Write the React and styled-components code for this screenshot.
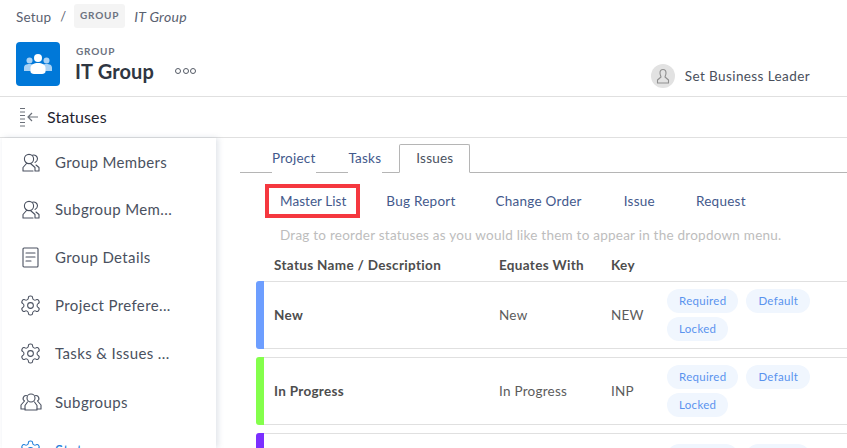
import React from "react";
import styled, { createGlobalStyle } from "styled-components";

const Global = createGlobalStyle`
  html, body { margin: 0; padding: 0; background: #fff; }
  body { font-family: "Lato", "Open Sans", "Liberation Sans", sans-serif; color: #454b57; }
  * { box-sizing: border-box; }
`;

const Page = styled.div`
  width: 847px;
  height: 448px;
  overflow: hidden;
  display: flex;
  flex-direction: column;
`;

const Breadcrumb = styled.div`
  height: 31px;
  flex: none;
  padding: 4px 0 0 16px;
  display: flex;
  align-items: flex-start;
  font-size: 13.5px;
  color: #5a6170;
`;
const Crumb = styled.span`
  line-height: 26px;
  letter-spacing: 0.2px;
`;
const Slash = styled.span`
  line-height: 24px;
  margin: 0 8px 0 9px;
  font-size: 13px;
`;
const TypeChip = styled.span`
  width: 51px;
  height: 24px;
  background: #f4f4f4;
  border-radius: 3px;
  font-size: 10px;
  font-weight: 700;
  letter-spacing: 0.8px;
  color: #6c7280;
  text-align: center;
  line-height: 23px;
`;
const CrumbName = styled.em`
  margin-left: 9px;
  line-height: 25px;
  font-size: 14px;
  color: #5a6170;
  letter-spacing: 0.3px;
`;

const Header = styled.header`
  height: 66px;
  flex: none;
  border-bottom: 1px solid #e0e0e0;
  padding: 11px 37px 0 16px;
  display: flex;
  align-items: flex-start;
`;
const Logo = styled.div`
  width: 44px;
  height: 44px;
  border-radius: 4px;
  background: #0078d8;
  display: flex;
  align-items: center;
  justify-content: center;
`;
const Titles = styled.div`
  margin-left: 15px;
  display: flex;
  flex-direction: column;
`;
const Eyebrow = styled.div`
  font-size: 10px;
  font-weight: 700;
  letter-spacing: 0.8px;
  color: #6c7280;
  line-height: 12px;
  margin: 3px 0 1px 1px;
`;
const TitleRow = styled.div`
  display: flex;
  align-items: center;
`;
const Title = styled.h1`
  margin: 0;
  font-size: 20px;
  font-weight: 700;
  line-height: 26px;
  color: #2f3642;
  letter-spacing: 0.15px;
`;
const More = styled.div`
  margin-left: 21px;
  display: flex;
  gap: 1.5px;
`;
const Dot = styled.span`
  width: 6px;
  height: 6px;
  border: 1px solid #555b66;
  border-radius: 50%;
`;
const Leader = styled.div`
  margin-left: auto;
  margin-top: 22px;
  height: 24px;
  display: flex;
  align-items: center;
  gap: 10px;
  font-size: 13.5px;
  letter-spacing: 0.4px;
  color: #4a505c;
`;
const Avatar = styled.div`
  width: 24px;
  height: 24px;
  border-radius: 50%;
  background: #e2e2e2;
  display: flex;
  align-items: center;
  justify-content: center;
`;

const SectionBar = styled.div`
  height: 41px;
  flex: none;
  border-bottom: 1px solid #e0e0e0;
  padding-left: 19px;
  display: flex;
  align-items: center;
  gap: 8px;
`;
const SectionTitle = styled.span`
  margin-bottom: 2px;
  font-size: 16px;
  color: #1f2430;
  letter-spacing: 0.1px;
`;

const Body = styled.div`
  flex: none;
  height: 310px;
  display: flex;
`;
const Sidebar = styled.nav`
  width: 214px;
  margin-left: 2px;
  flex: none;
  box-shadow: 2px 0 6px rgba(90, 110, 140, 0.2);
  background: #fff;
  padding-left: 17px;
`;
const NavItem = styled.div`
  height: ${(p) => p.$h}px;
  display: flex;
  align-items: center;
  gap: 13px;
  font-size: 15px;
  letter-spacing: 0.38px;
  color: ${(p) => (p.$active ? "#1f7fdc" : "#4a5160")};
  white-space: nowrap;
`;
const NavIcon = styled.span`
  width: 23px;
  height: 24px;
  flex: none;
  display: flex;
  align-items: center;
  justify-content: center;
`;

const Main = styled.main`
  flex: 1;
  min-width: 0;
  padding-left: 24px;
  display: flex;
  flex-direction: column;
`;
const Tabs = styled.div`
  flex: none;
  height: 35px;
  padding: 6px 0 0 32px;
  border-bottom: 1px solid #b5b5b5;
  display: flex;
  align-items: stretch;
`;
const Tab = styled.div`
  height: 29px;
  padding: ${(p) => (p.$active ? "0 16px" : "0")};
  margin-right: ${(p) => (p.$active ? "0" : p.$gap)}px;
  border: ${(p) => (p.$active ? "1px solid #b5b5b5" : "1px solid transparent")};
  border-bottom: ${(p) => (p.$active ? "1px solid #fff" : "none")};
  border-left-width: ${(p) => (p.$active ? 1 : 0)}px;
  border-radius: 2px 2px 0 0;
  background: #fff;
  font-size: 13.5px;
  line-height: 26px;
  letter-spacing: 0.22px;
  color: ${(p) => (p.$active ? "#4a5160" : "#43598c")};
`;
const SubTabs = styled.div`
  display: flex;
  flex: none;
  margin: 11px 0 0 25px;
  height: 34px;
  align-items: stretch;
`;
const SubTab = styled.div`
  padding: ${(p) => (p.$selected ? "0 10px 0 11px" : "0 15px")};
  margin-right: ${(p) => p.$gap || 0}px;
  border: ${(p) => (p.$selected ? "4px solid #f5383f" : "none")};
  font-size: 13.5px;
  letter-spacing: ${(p) => (p.$selected ? 0.05 : 0.25)}px;
  color: #43598c;
  display: flex;
  align-items: center;
  white-space: nowrap;
`;
const Hint = styled.div`
  flex: none;
  margin: 8px 0 0 40px;
  font-size: 13.5px;
  line-height: 18px;
  letter-spacing: 0.24px;
  color: #bdbdbd;
  white-space: nowrap;
`;
const Grid = `
  display: grid;
  grid-template-columns: 225px 112px 56px 1fr;
`;
const TableHead = styled.div`
  ${Grid}
  flex: none;
  margin: 12px 0 3px 34px;
  height: 22px;
  font-size: 13.5px;
  font-weight: 700;
  letter-spacing: 0.33px;
  line-height: 18px;
  color: #4d4d4d;
`;
const Row = styled.div`
  margin: 0 0 8px 16px;
  height: ${(p) => p.$h}px;
  flex: none;
  display: flex;
`;
const Swatch = styled.div`
  width: 8px;
  flex: none;
  background: ${(p) => p.$color};
  border-radius: 3px 0 0 3px;
`;
const RowBody = styled.div`
  ${Grid}
  flex: 1;
  align-items: center;
  padding-left: 10px;
  border-top: 1px solid #e0e0e0;
  border-bottom: 1px solid #e0e0e0;
  font-size: 13.5px;
  letter-spacing: 0.25px;
  color: #5c5c5c;
`;
const StatusName = styled.div`
  font-weight: 700;
  color: #4d4d4d;
  font-size: 13.5px;
  letter-spacing: 0.3px;
`;
const Pills = styled.div`
  display: flex;
  flex-wrap: wrap;
  gap: 4px 8px;
  width: 160px;
`;
const Pill = styled.span`
  height: 24px;
  padding: 0 12px;
  border-radius: 12px;
  background: #f0f6fe;
  color: #5a93ee;
  font-size: 11.5px;
  letter-spacing: 0.3px;
  line-height: 24px;
`;

const stroke = { fill: "none", stroke: "#4a5160", strokeWidth: 1.1, strokeLinejoin: "round", strokeLinecap: "round" };

const PeopleIcon = () => (
  <svg width="18" height="19" viewBox="0 0 18 19" {...stroke}>
    <circle cx="7" cy="6" r="4.600" />
    <path d="M4.500 10.500 1 14.500V18H11" />
    <path d="M8.500 10.500 13 14.500V18H17V14.500L14 12" />
    <path d="M10.500 2.200a3.800 3.800 0 0 1 5 3.600 4 4 0 0 1-2.500 3.600" />
  </svg>
);
const DocIcon = () => (
  <svg width="17" height="21" viewBox="0 0 17 21" {...stroke}>
    <rect x="1" y="1" width="15" height="19" rx="1" />
    <path d="M4 6H13M4 10H13M4 14H9" />
  </svg>
);
const GearIcon = ({ color }) => (
  <svg width="23" height="23" viewBox="0 0 24 24" {...stroke} stroke={color || "#4a5160"} strokeWidth="1.1">
    <path d="M12.220 2h-.44a2 2 0 0 0-2 2v.18a2 2 0 0 1-1 1.730l-.43.25a2 2 0 0 1-2 0l-.15-.08a2 2 0 0 0-2.730.73l-.22.38a2 2 0 0 0 .73 2.730l.15.1a2 2 0 0 1 1 1.720v.51a2 2 0 0 1-1 1.740l-.15.09a2 2 0 0 0-.73 2.730l.22.38a2 2 0 0 0 2.730.73l.15-.08a2 2 0 0 1 2 0l.43.25a2 2 0 0 1 1 1.730V20a2 2 0 0 0 2 2h.44a2 2 0 0 0 2-2v-.18a2 2 0 0 1 1-1.730l.43-.25a2 2 0 0 1 2 0l.15.08a2 2 0 0 0 2.730-.73l.22-.39a2 2 0 0 0-.73-2.730l-.15-.08a2 2 0 0 1-1-1.740v-.5a2 2 0 0 1 1-1.740l.15-.09a2 2 0 0 0 .73-2.730l-.22-.38a2 2 0 0 0-2.730-.73l-.15.08a2 2 0 0 1-2 0l-.43-.25a2 2 0 0 1-1-1.730V4a2 2 0 0 0-2-2z" />
    <circle cx="12" cy="12" r="3" />
  </svg>
);
const GroupIcon = () => (
  <svg width="22" height="18" viewBox="0 0 22 18" {...stroke}>
    <circle cx="11" cy="5" r="4" />
    <path d="M7.500 9 5 12.500V17H17V12.500L14.500 9" />
    <path d="M6.500 2.500a3 3 0 0 0-2 5.500L1 12v4H5M15.500 2.500a3 3 0 0 1 2 5.500L21 12v4H17" />
  </svg>
);

const nav = [
  ["Group Members", <PeopleIcon />, 48],
  ["Subgroup Mem...", <PeopleIcon />, 46],
  ["Group Details", <DocIcon />, 50],
  ["Project Prefere...", <GearIcon />, 46],
  ["Tasks & Issues ...", <GearIcon />, 50],
  ["Subgroups", <GroupIcon />, 48],
  ["Statuses", <GearIcon color="#1f7fdc" />, 48, true],
];

const statuses = [
  ["New", "New", "NEW", "#6d9eff", 68],
  ["In Progress", "In Progress", "INP", "#84ff4c", 68],
  ["", "", "", "#7b2fff", 74],
];

export default function App() {
  return (
    <Page>
      <Global />
      <Breadcrumb>
        <Crumb>Setup</Crumb>
        <Slash>/</Slash>
        <TypeChip>GROUP</TypeChip>
        <CrumbName>IT Group</CrumbName>
      </Breadcrumb>
      <Header>
        <Logo>
          <svg width="28" height="20" viewBox="0 0 28 20">
            <g fill="#a9d2f5">
              <circle cx="5.500" cy="6.500" r="3" />
              <circle cx="22.500" cy="6.500" r="3" />
              <path d="M0 17V13.500C0 11 2.500 10 5.500 10S11 11 11 13.500V17ZM17 17V13.500C17 11 19.500 10 22.500 10S28 11 28 13.500V17Z" />
            </g>
            <g fill="#fff">
              <circle cx="14" cy="4" r="4" />
              <path d="M6.500 17.500V14C6.500 10.500 10 9 14 9S21.500 10.500 21.500 14V17.500C21.500 19 20 20 18 20H10C8 20 6.500 19 6.500 17.500Z" />
            </g>
          </svg>
        </Logo>
        <Titles>
          <Eyebrow>GROUP</Eyebrow>
          <TitleRow>
            <Title>IT Group</Title>
            <More>
              <Dot />
              <Dot />
              <Dot />
            </More>
          </TitleRow>
        </Titles>
        <Leader>
          <Avatar>
            <svg width="14" height="16" viewBox="0 0 14 16" fill="none" stroke="#8f8f8f" strokeWidth="1.100">
              <path d="M4 5a3 3.500 0 0 1 6 0c0 2-1 3-1 4l3.500 3v3h-11v-3L5 9c0-1-1-2-1-4Z" strokeLinejoin="round" />
            </svg>
          </Avatar>
          Set Business Leader
        </Leader>
      </Header>
      <SectionBar>
        <svg width="20" height="20" viewBox="0 0 20 20" fill="none" stroke="#6b7079" strokeWidth="1">
          <path d="M1 1.500H6M1 5H6M1 8.500H6M1 12H6M1 15.500H6M1 19H6" />
          <path d="M19 10H9M13 6 9 10 13 14" strokeWidth="1.200" />
        </svg>
        <SectionTitle>Statuses</SectionTitle>
      </SectionBar>
      <Body>
        <Sidebar>
          {nav.map(([label, icon, h, active]) => (
            <NavItem key={label} $h={h} $active={active}>
              <NavIcon>{icon}</NavIcon>
              {label}
            </NavItem>
          ))}
        </Sidebar>
        <Main>
          <Tabs>
            <Tab $gap={32}>Project</Tab>
            <Tab $gap={17}>Tasks</Tab>
            <Tab $active>Issues</Tab>
          </Tabs>
          <SubTabs>
            <SubTab $selected $gap={11}>Master List</SubTab>
            <SubTab $gap={10}>Bug Report</SubTab>
            <SubTab $gap={12}>Change Order</SubTab>
            <SubTab $gap={11}>Issue</SubTab>
            <SubTab>Request</SubTab>
          </SubTabs>
          <Hint>Drag to reorder statuses as you would like them to appear in the dropdown menu.</Hint>
          <TableHead>
            <span>Status Name / Description</span>
            <span>Equates With</span>
            <span>Key</span>
          </TableHead>
          {statuses.map(([name, eq, key, color, h]) => (
            <Row key={color} $h={h}>
              <Swatch $color={color} />
              <RowBody>
                <StatusName>{name}</StatusName>
                <span>{eq}</span>
                <span>{key}</span>
                <Pills>
                  <Pill>Required</Pill>
                  <Pill>Default</Pill>
                  <Pill>Locked</Pill>
                </Pills>
              </RowBody>
            </Row>
          ))}
        </Main>
      </Body>
    </Page>
  );
}
